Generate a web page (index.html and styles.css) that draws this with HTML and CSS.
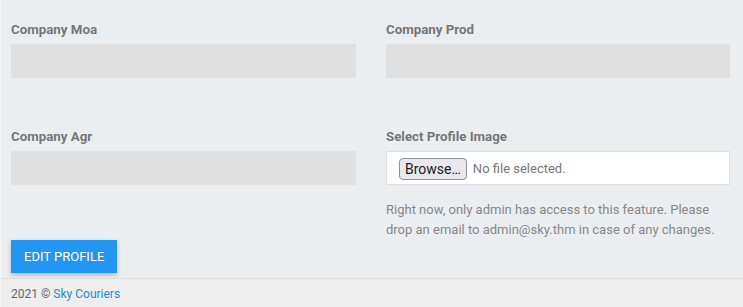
FILE: index.html
```html
<!DOCTYPE html>
<html lang="en">
<head>
    <meta charset="UTF-8">
    <meta name="viewport" content="width=device-width, initial-scale=1.0">
    <title>Edit Profile - Sky Couriers</title>
    <link rel="stylesheet" href="styles.css">
</head>
<body>
    <div class="page">
        <form class="profile-form">
            <div class="form-grid">
                <div class="form-group">
                    <label for="companyMoa">Company Moa</label>
                    <input type="text" id="companyMoa" class="field" disabled>
                </div>
                <div class="form-group">
                    <label for="companyProd">Company Prod</label>
                    <input type="text" id="companyProd" class="field" disabled>
                </div>
                <div class="form-group">
                    <label for="companyAgr">Company Agr</label>
                    <input type="text" id="companyAgr" class="field" disabled>
                </div>
                <div class="form-group">
                    <label for="profileImage">Select Profile Image</label>
                    <div class="file-field">
                        <button type="button" class="browse-btn">Browse…</button>
                        <span class="file-name">No file selected.</span>
                    </div>
                    <p class="help-text">Right now, only admin has access to this feature. Please drop an email to admin@sky.thm in case of any changes.</p>
                </div>
            </div>
            <button type="button" class="btn-primary">EDIT PROFILE</button>
        </form>
    </div>
    <footer class="footer">
        2021 © <a href="#">Sky Couriers</a>
    </footer>
</body>
</html>
```

FILE: styles.css
```css
body {
    margin: 0;
    font-family: 'Roboto', 'Liberation Sans', sans-serif;
    background-color: #ebeef1;
    border-left: 1px solid #f3f5f7;
}

.page {
    padding: 21px 13px 5px 10px;
}

.form-grid {
    display: grid;
    grid-template-columns: 345px 344px;
    column-gap: 30px;
    row-gap: 50px;
}

.form-group label {
    display: block;
    font-size: 13.3px;
    line-height: 18px;
    font-weight: 700;
    color: #767676;
    margin-bottom: 5px;
}

.field {
    display: block;
    width: 100%;
    height: 34px;
    box-sizing: border-box;
    border: none;
    background-color: #e0e0e0;
    margin: 0;
}

.file-field {
    display: flex;
    align-items: center;
    height: 34px;
    box-sizing: border-box;
    background-color: #fff;
    border: 1px solid #dedede;
    padding-left: 12px;
    padding-top: 1px;
}

.browse-btn {
    font-family: 'Roboto', 'Liberation Sans', sans-serif;
    font-size: 14px;
    color: #1b1b1b;
    background-color: #e9e9ed;
    border: 1px solid #8f8f9d;
    border-radius: 4px;
    height: 22px;
    padding: 0 5px;
    margin: 0;
}

.file-name {
    font-size: 13px;
    color: #777;
    margin-left: 6px;
}

.help-text {
    margin: 15px 0 0;
    font-size: 13px;
    line-height: 20px;
    color: #888;
}

.btn-primary {
    display: block;
    margin-top: 0;
    height: 33px;
    padding: 0 13px;
    font-family: 'Roboto', 'Liberation Sans', sans-serif;
    font-size: 13px;
    color: #fff;
    background-color: #2196f3;
    border: none;
    border-radius: 0;
    box-shadow: 0 2px 4px rgba(0, 0, 0, 0.25);
    cursor: pointer;
}

.footer {
    border-top: 1px solid #dcdcdc;
    background-color: #eeeeee;
    padding: 6px 10px 8px;
    font-size: 12px;
    line-height: 18px;
    color: #666;
}

.footer a {
    color: #1a8ccf;
    text-decoration: none;
}
```
